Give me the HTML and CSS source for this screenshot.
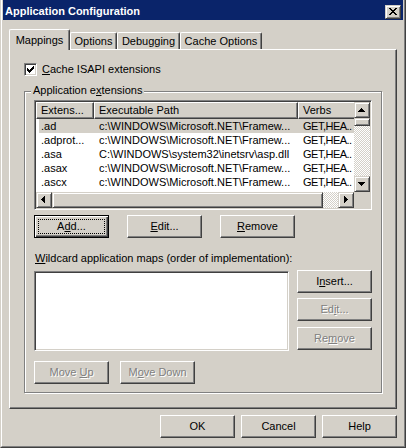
FILE: index.html
```html
<!DOCTYPE html>
<html>
<head>
<meta charset="utf-8">
<title>Application Configuration</title>
<link rel="stylesheet" href="styles.css">
</head>
<body>
<div class="window">
  <div class="frame">
    <div class="titlebar">
      <span class="title">Application Configuration</span>
      <span class="closebtn"><svg width="8" height="7" viewBox="0 0 8 7" shape-rendering="crispEdges"><path d="M0 0h2v1H0zM6 0h2v1H6zM1 1h2v1H1zM5 1h2v1H5zM2 2h4v1H2zM3 3h2v1H3zM2 4h4v1H2zM1 5h2v1H1zM5 5h2v1H5zM0 6h2v1H0zM6 6h2v1H6z" fill="#000"/></svg></span>
    </div>
    <div class="client">
      <div class="tabs">
        <div class="tab sel t-map">Mappings</div>
        <div class="tab t-opt">Options</div>
        <div class="tab t-dbg">Debugging</div>
        <div class="tab t-cache">Cache Options</div>
      </div>
      <div class="panel">
        <div class="chkrow">
          <span class="chk"><svg width="7" height="7" viewBox="0 0 7 7" shape-rendering="crispEdges"><path d="M0 2h1v3H0zM1 3h1v3H1zM2 4h1v3H2zM3 3h1v3H3zM4 2h1v3H4zM5 1h1v3H5zM6 0h1v3H6z" fill="#000"/></svg></span>
          <span class="chklabel"><u>C</u>ache ISAPI extensions</span>
        </div>
        <div class="group">
          <div class="glabel">Application e<u>x</u>tensions</div>
          <div class="listview">
            <div class="lv-main">
              <div class="lv-head">
                <div class="hc c1">Extens...</div>
                <div class="hc c2">Executable Path</div>
                <div class="hc c3">Verbs</div>
              </div>
              <div class="lv-row sel"><div class="c1">.ad</div><div class="c2">c:\WINDOWS\Microsoft.NET\Framew...</div><div class="c3">GET,HEA..</div></div>
              <div class="lv-row"><div class="c1">.adprot...</div><div class="c2">c:\WINDOWS\Microsoft.NET\Framew...</div><div class="c3">GET,HEA..</div></div>
              <div class="lv-row"><div class="c1">.asa</div><div class="c2">C:\WINDOWS\system32\inetsrv\asp.dll</div><div class="c3">GET,HEA..</div></div>
              <div class="lv-row"><div class="c1">.asax</div><div class="c2">c:\WINDOWS\Microsoft.NET\Framew...</div><div class="c3">GET,HEA..</div></div>
              <div class="lv-row"><div class="c1">.ascx</div><div class="c2">c:\WINDOWS\Microsoft.NET\Framew...</div><div class="c3">GET,HEA..</div></div>
            </div>
            <div class="vscroll">
              <div class="sbtn up"><svg width="7" height="4" viewBox="0 0 7 4" shape-rendering="crispEdges"><path d="M3 0h1v1H3zM2 1h3v1H2zM1 2h5v1H1zM0 3h7v1H0z" fill="#000"/></svg></div>
              <div class="sbtn vthumb"></div>
              <div class="track"></div>
              <div class="sbtn down"><svg width="7" height="4" viewBox="0 0 7 4" shape-rendering="crispEdges"><path d="M0 0h7v1H0zM1 1h5v1H1zM2 2h3v1H2zM3 3h1v1H3z" fill="#000"/></svg></div>
            </div>
            <div class="hscroll">
              <div class="sbtn left"><svg width="4" height="7" viewBox="0 0 4 7" shape-rendering="crispEdges"><path d="M0 3h1v1H0zM1 2h1v3H1zM2 1h1v5H2zM3 0h1v7H3z" fill="#000"/></svg></div>
              <div class="sbtn hthumb"></div>
              <div class="track"></div>
              <div class="sbtn right"><svg width="4" height="7" viewBox="0 0 4 7" shape-rendering="crispEdges"><path d="M0 0h1v7H0zM1 1h1v5H1zM2 2h1v3H2zM3 3h1v1H3z" fill="#000"/></svg></div>
            </div>
            <div class="corner"></div>
          </div>
          <div class="btnrow">
            <div class="btn default"><span>A<u>d</u>d...</span></div>
            <div class="btn"><span><u>E</u>dit...</span></div>
            <div class="btn"><span><u>R</u>emove</span></div>
          </div>
          <div class="wlabel"><u>W</u>ildcard application maps (order of implementation):</div>
          <div class="wrow">
            <div class="listbox"></div>
            <div class="wbtns">
              <div class="btn"><span>I<u>n</u>sert...</span></div>
              <div class="btn dis b-edit"><span>Ed<u>i</u>t...</span></div>
              <div class="btn dis b-rem"><span>Re<u>m</u>ove</span></div>
            </div>
          </div>
          <div class="btnrow2">
            <div class="btn dis"><span>Move <u>U</u>p</span></div>
            <div class="btn dis"><span>M<u>o</u>ve Down</span></div>
          </div>
        </div>
      </div>
      <div class="dlgbtns">
        <div class="btn"><span>OK</span></div>
        <div class="btn"><span>Cancel</span></div>
        <div class="btn"><span>Help</span></div>
      </div>
    </div>
  </div>
</div>
</body>
</html>
```
FILE: styles.css
```css
* { box-sizing: border-box; }
html, body { margin: 0; padding: 0; }
body {
  font-family: "Liberation Sans", Arial, sans-serif;
  font-size: 11px;
  line-height: 13px;
  color: #000;
  background: #D4D0C8;
  overflow: hidden;
}
svg { display: block; }

.window {
  width: 406px;
  height: 448px;
  background: #D4D0C8;
  border-left: 1px solid #D4D0C8;
  border-right: 1px solid #404040;
  border-bottom: 1px solid #404040;
}
.frame {
  height: 100%;
  border-left: 1px solid #fff;
  border-right: 1px solid #808080;
  border-bottom: 1px solid #808080;
  padding: 0 1px 1px 1px;
  display: flex;
  flex-direction: column;
}

.titlebar {
  height: 20px;
  flex: none;
  background: #0A246A;
  display: flex;
  align-items: flex-start;
  padding: 0 2px;
}
.title {
  color: #fff;
  font-weight: bold;
  margin-top: 5px;
  line-height: 13px;
}
.closebtn {
  margin-left: auto;
  margin-top: 5px;
  width: 16px;
  height: 14px;
  background: #D4D0C8;
  border: 1px solid;
  border-color: #D4D0C8 #404040 #404040 #D4D0C8;
  box-shadow: inset 1px 1px 0 #fff, inset -1px -1px 0 #808080;
  padding: 2px 0 0 3px;
}

.client {
  flex: 1;
  padding: 9px 6px 0 6px;
}

.tabs {
  display: flex;
  align-items: flex-end;
  height: 20px;
}
.tab {
  flex: none;
  height: 17px;
  border-top: 1px solid #fff;
  border-left: 1px solid #fff;
  border-right: 1px solid #404040;
  box-shadow: inset -1px 0 0 #808080;
  border-radius: 2px 2px 0 0;
  background: #D4D0C8;
  text-align: center;
  padding-top: 2px;
  line-height: 13px;
  white-space: nowrap;
}
.tab.sel {
  height: 21px;
  margin-bottom: -1px;
  padding-top: 4px;
  position: relative;
  z-index: 1;
}
.t-map { width: 61px; }
.t-opt { width: 47px; }
.t-dbg { width: 63px; }
.t-cache { width: 82px; }

.panel {
  width: 388px;
  height: 360px;
  border-top: 1px solid #fff;
  border-left: 1px solid #fff;
  border-right: 1px solid #404040;
  border-bottom: 1px solid #404040;
  box-shadow: inset -1px -1px 0 #808080;
  padding-left: 14px;
  display: flex;
  flex-direction: column;
  align-items: flex-start;
}

.chkrow {
  margin-top: 13px;
  height: 13px;
  display: flex;
  align-items: center;
  gap: 5px;
}
.chk {
  width: 13px;
  height: 13px;
  background: #fff;
  border: 1px solid;
  border-color: #808080 #fff #fff #808080;
  box-shadow: inset 1px 1px 0 #404040, inset -1px -1px 0 #D4D0C8;
  padding: 2px;
}
.chklabel { line-height: 13px; }

.group {
  margin-top: 15px;
  width: 358px;
  height: 302px;
  border: 1px solid #808080;
  box-shadow: 1px 1px 0 #fff, inset 1px 1px 0 #fff;
  padding-left: 9px;
  display: flex;
  flex-direction: column;
  align-items: flex-start;
}
.glabel {
  margin-top: -8px;
  margin-left: -3px;
  padding: 0 2px;
  background: #D4D0C8;
  line-height: 13px;
}

.listview {
  margin-top: 3px;
  width: 338px;
  height: 110px;
  border: 1px solid;
  border-color: #808080 #fff #fff #808080;
  box-shadow: inset 1px 1px 0 #404040, inset -1px -1px 0 #D4D0C8;
  padding: 1px;
  background: #fff;
  display: grid;
  grid-template-columns: 318px 16px;
  grid-template-rows: 90px 16px;
}
.lv-main {
  overflow: hidden;
  background: #fff;
}
.lv-head {
  display: flex;
  height: 17px;
}
.hc {
  flex: none;
  height: 17px;
  border: 1px solid;
  border-color: #fff #404040 #404040 #fff;
  box-shadow: inset -1px -1px 0 #808080;
  background: #D4D0C8;
  padding-left: 4px;
  line-height: 15px;
  white-space: nowrap;
  overflow: hidden;
}
.hc.c1 { width: 58px; }
.hc.c2 { width: 204px; }
.hc.c3 { width: 80px; }

.lv-row {
  display: flex;
  height: 14px;
  line-height: 14px;
  margin-left: 3px;
  white-space: nowrap;
}
.lv-row.sel { background: #D4D0C8; }
.lv-row .c1 { flex: none; width: 55px; padding-left: 2px; overflow: hidden; }
.lv-row .c2 { flex: none; width: 204px; padding-left: 5px; overflow: hidden; }
.lv-row .c3 { flex: 1; padding-left: 5px; letter-spacing: -0.5px; }

.sbtn {
  flex: none;
  background: #D4D0C8;
  border: 1px solid;
  border-color: #D4D0C8 #404040 #404040 #D4D0C8;
  box-shadow: inset 1px 1px 0 #fff, inset -1px -1px 0 #808080;
}
.track {
  flex: 1;
  background-color: #fff;
  background-image: repeating-conic-gradient(#D4D0C8 0% 25%, #fff 0% 50%);
  background-size: 2px 2px;
}
.vscroll {
  display: flex;
  flex-direction: column;
}
.vscroll .sbtn { width: 16px; height: 16px; }
.vscroll .up, .vscroll .down { padding: 5px 0 0 3px; }
.vscroll .vthumb { height: 8px; }
.hscroll {
  display: flex;
}
.hscroll .sbtn { width: 16px; height: 16px; }
.hscroll .left { padding: 3px 0 0 4px; }
.hscroll .right { padding: 3px 0 0 5px; }
.hscroll .hthumb { width: 271px; }
.corner { background: #D4D0C8; }

.btn {
  flex: none;
  width: 75px;
  height: 23px;
  background: #D4D0C8;
  border: 1px solid;
  border-color: #fff #404040 #404040 #fff;
  box-shadow: inset -1px -1px 0 #808080;
  display: flex;
  align-items: center;
  justify-content: center;
  line-height: 13px;
  white-space: nowrap;
}
.btn.default {
  border-color: #000;
  box-shadow: inset 1px 1px 0 #fff, inset -1px -1px 0 #404040, inset -2px -2px 0 #808080;
  outline: 1px dotted #000;
  outline-offset: -5px;
}
.btn.dis {
  color: #808080;
  text-shadow: 1px 1px 0 #fff;
}

.btnrow {
  margin-top: 5px;
  display: flex;
  gap: 18px;
}
.wlabel {
  margin-top: 14px;
  margin-left: 1px;
  line-height: 13px;
  white-space: nowrap;
}
.wrow {
  margin-top: 5px;
  display: flex;
  gap: 8px;
}
.listbox {
  margin-top: 1px;
  width: 255px;
  height: 80px;
  background: #fff;
  border: 1px solid;
  border-color: #808080 #fff #fff #808080;
  box-shadow: inset 1px 1px 0 #404040, inset -1px -1px 0 #D4D0C8;
}
.wbtns {
  display: flex;
  flex-direction: column;
}
.wbtns .b-edit { margin-top: 5px; }
.wbtns .b-rem { margin-top: 6px; }
.btnrow2 {
  margin-top: 10px;
  display: flex;
  gap: 11px;
}

.dlgbtns {
  margin-top: 6px;
  display: flex;
  justify-content: flex-end;
  gap: 6px;
}
```
